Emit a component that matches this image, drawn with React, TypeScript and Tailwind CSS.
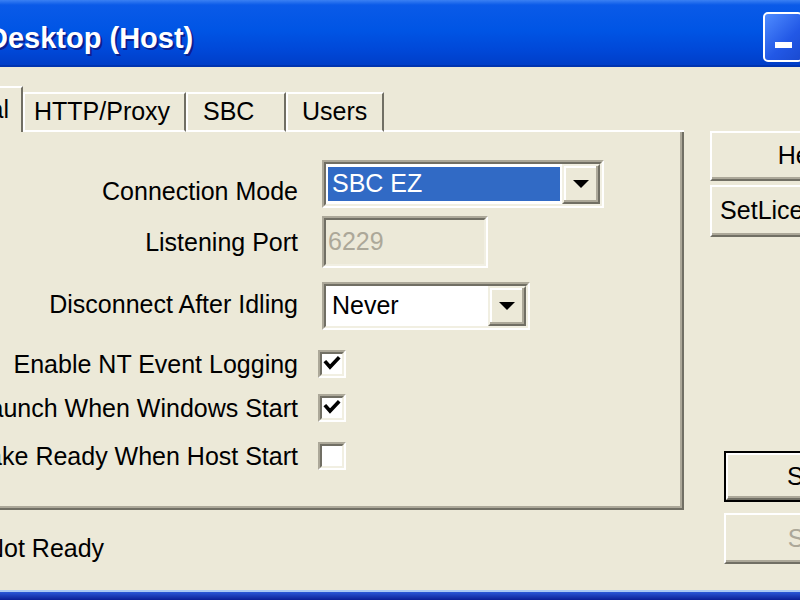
import type { ReactNode } from "react";

function Sunken({ className, inner, children }: { className: string; inner: string; children?: ReactNode }) {
  return (
    <div className={`shrink-0 border-2 border-t-[#aca899] border-l-[#aca899] border-b-white border-r-white ${className}`}>
      <div className={`h-full border-2 border-t-[#716f64] border-l-[#716f64] border-b-[#f1efe2] border-r-[#f1efe2] ${inner}`}>
        {children}
      </div>
    </div>
  );
}

function DropButton() {
  return (
    <div className="flex h-full w-[38px] shrink-0 items-center justify-center border-2 border-t-[#f1efe2] border-l-[#f1efe2] border-b-[#716f64] border-r-[#716f64] bg-[#ece9d8] shadow-[inset_-2px_-2px_0_#aca899,inset_2px_2px_0_#ffffff]">
      <svg width="18" height="9" viewBox="0 0 18 9">
        <polygon points="1,0 17,0 9,8" fill="#000" />
      </svg>
    </div>
  );
}

function Check({ checked }: { checked: boolean }) {
  return (
    <Sunken className="ml-[18px] h-[28px] w-[28px]" inner="bg-white">
      {checked && (
        <svg width="20" height="20" viewBox="0 0 20 20">
          <path d="M4 8.5 L8 13 L16 4.5" fill="none" stroke="#000" strokeWidth="3.6" strokeLinecap="square" />
        </svg>
      )}
    </Sunken>
  );
}

function Label({ children, className = "" }: { children: ReactNode; className?: string }) {
  return (
    <div className={`flex w-[300px] shrink-0 justify-end whitespace-nowrap pr-[2px] leading-[30px] ${className}`}>
      <span className="shrink-0">{children}</span>
    </div>
  );
}

function Button({ label, width, disabled, isDefault, className }: { label: string; width: string; disabled?: boolean; isDefault?: boolean; className: string }) {
  const face = (
    <div
      className={`flex h-full items-center justify-center whitespace-nowrap border-2 border-t-white border-l-white border-b-[#716f64] border-r-[#716f64] shadow-[inset_-2px_-2px_0_#aca899] ${
        disabled ? "text-[#aca899]" : "text-black"
      }`}
    >
      {label}
    </div>
  );
  return (
    <div className={`shrink-0 ${width} ${className} ${isDefault ? "border-2 border-black" : ""}`}>{face}</div>
  );
}

export default function App() {
  return (
    <div className="flex h-[600px] w-[800px] flex-col overflow-hidden bg-[#ece9d8] font-['Liberation_Sans',Arial,sans-serif] text-[25px] text-black">
      {/* title bar */}
      <div className="flex h-[67px] shrink-0 items-center border-b-2 border-b-[#0034b0] bg-[linear-gradient(to_bottom,#3a80f3_0px,#0a5ae8_5px,#0055e5_30px,#0048d8_50px,#003ec8_65px)]">
        <div className="ml-[-13px] mt-[12px] whitespace-nowrap text-[29px] font-bold text-white [text-shadow:2px_2px_0_#0b1f8f]">
          Desktop (Host)
        </div>
        <div className="ml-auto mr-[-3px] mt-[8px] h-[50px] w-[40px] shrink-0 rounded-[5px] border-2 border-white bg-[linear-gradient(135deg,#4f8cff,#2258e6_60%,#1a4ad0)] pl-[10px] pt-[28px]">
          <div className="h-[6px] w-[17px] bg-white" />
        </div>
      </div>

      {/* body */}
      <div className="flex flex-1">
        <div className="flex w-[684px] shrink-0 flex-col pt-[19px]">
          {/* tabs */}
          <div className="flex h-[46px] items-end">
            <div className="flex h-[46px] w-[23px] items-center justify-end overflow-hidden border-t-2 border-r-2 border-t-white border-r-[#716f64] pr-[12px]">
              <span className="shrink-0 whitespace-nowrap">General</span>
            </div>
            <div className="flex h-[40px] w-[163px] items-center whitespace-nowrap border-2 border-t-white border-l-white border-b-white border-r-[#716f64] pl-[9px]">
              HTTP/Proxy
            </div>
            <div className="flex h-[40px] w-[100px] items-center whitespace-nowrap border-2 border-t-white border-l-white border-b-white border-r-[#716f64] pl-[15px]">
              SBC
            </div>
            <div className="flex h-[40px] w-[98px] items-center whitespace-nowrap border-2 border-t-white border-l-white border-b-white border-r-[#716f64] pl-[14px]">
              Users
            </div>
            <div className="h-[2px] flex-1 bg-white" />
          </div>

          {/* panel */}
          <div className="flex h-[378px] flex-col border-r-2 border-b-2 border-r-[#716f64] border-b-[#716f64] pt-[28px] shadow-[inset_-2px_-2px_0_#aca899]">
            <div className="flex h-[48px] items-center">
              <Label className="mt-[14px]">Connection Mode</Label>
              <Sunken className="ml-[22px] h-[48px] w-[282px]" inner="flex bg-white">
                <div className="flex-1 py-[3px] pl-[2px] pr-[2px]">
                  <div className="flex h-full items-center bg-[#316ac5] pl-[4px] text-white">SBC EZ</div>
                </div>
                <DropButton />
              </Sunken>
            </div>
            <div className="mt-[8px] flex h-[52px] items-center">
              <Label>Listening Port</Label>
              <Sunken className="ml-[22px] h-[52px] w-[166px]" inner="flex items-center bg-[#ece9d8] pl-[2px] text-[#aca899]">
                6229
              </Sunken>
            </div>
            <div className="mt-[14px] flex h-[48px] items-center">
              <Label className="mt-[-4px]">Disconnect After Idling</Label>
              <Sunken className="ml-[22px] h-[48px] w-[208px]" inner="flex bg-white">
                <div className="flex flex-1 items-center pl-[6px]">Never</div>
                <DropButton />
              </Sunken>
            </div>
            <div className="mt-[20px] flex h-[28px] items-center">
              <Label>Enable NT Event Logging</Label>
              <Check checked />
            </div>
            <div className="mt-[16px] flex h-[28px] items-center">
              <Label>Launch When Windows Start</Label>
              <Check checked />
            </div>
            <div className="mt-[20px] flex h-[28px] items-center">
              <Label>Make Ready When Host Start</Label>
              <Check checked={false} />
            </div>
          </div>

          {/* status */}
          <div className="ml-[-14px] mt-[23px] whitespace-nowrap leading-[30px]">Not Ready</div>
        </div>

        {/* right buttons */}
        <div className="flex min-w-0 flex-1 flex-col items-start pl-[26px] pt-[64px]">
          <Button label="Help" width="w-[187px]" className="h-[50px]" />
          <Button label="SetLicenseKey" width="w-[187px]" className="mt-[4px] h-[52px]" />
          <Button label="Start" width="w-[179px]" isDefault className="ml-[14px] mt-[214px] h-[51px]" />
          <Button label="Stop" width="w-[179px]" disabled className="ml-[14px] mt-[11px] h-[51px]" />
        </div>
      </div>

      {/* bottom frame */}
      <div className="h-[10px] shrink-0 border-t-2 border-t-[#a8c8f4] bg-[linear-gradient(to_bottom,#2a58d8,#0a1f96)]" />
    </div>
  );
}
